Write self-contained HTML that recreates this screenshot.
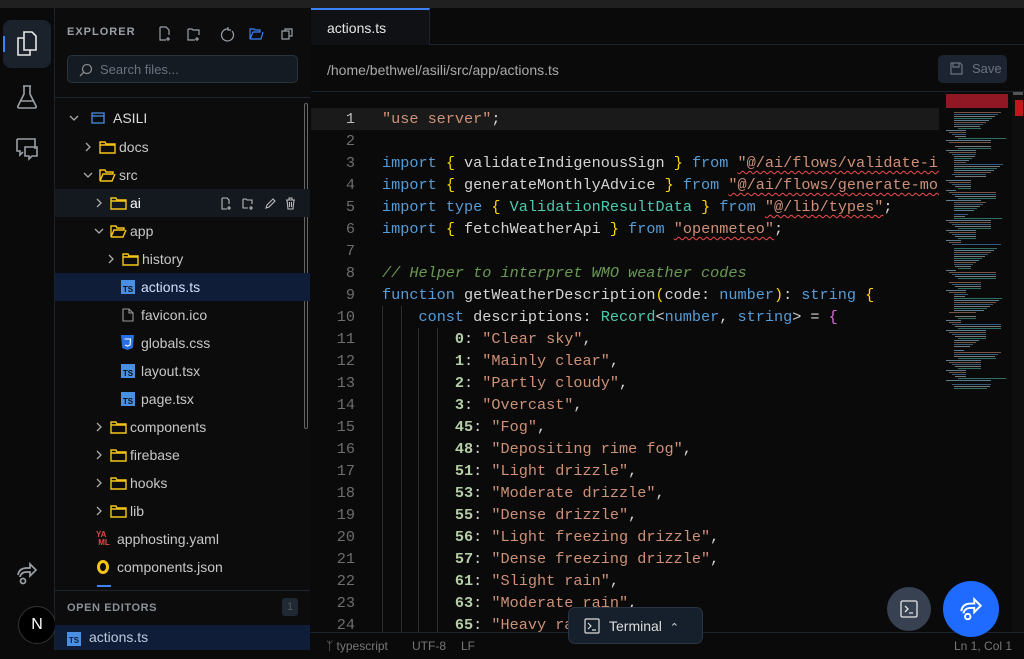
<!DOCTYPE html>
<html><head><meta charset="utf-8"><style>
*{box-sizing:border-box;margin:0;padding:0}
body{width:1024px;height:650px;overflow:hidden;background:#0a0a0a;font-family:"Liberation Sans",sans-serif;color:#ccc;position:relative}
.abs{position:absolute}
.topbar{left:0;top:0;width:1024px;height:8px;background:#202020}
.act{left:0;top:8px;width:55px;height:642px;background:#0a0a0a;border-right:1px solid #1c2128}
.side{left:55px;top:8px;width:255px;height:642px;background:#0c0c0d}
.row{position:absolute;left:0;width:255px;height:28px;font-size:14px;color:#c8c8c8;line-height:28px}
.row span{position:absolute}
.code{left:311px;top:108px;width:628px;height:524px;font-family:"Liberation Mono",monospace;font-size:15.2px;overflow:hidden}
.ln{position:absolute;left:0;width:628px;height:22px;line-height:22px;white-space:pre}
.ln .n{position:absolute;left:0;width:44px;text-align:right;color:#6e6e6e}
.ln .t{position:absolute;left:71px;color:#d4d4d4}
.k{color:#569cd6}.s{color:#ce9178}.b{color:#ffd700}.p{color:#da70d6}.ty{color:#4ec9b0}.c{color:#6a9955;font-style:italic}.num{color:#b5cea8;font-weight:bold}
.sq{text-decoration:underline wavy #f14c4c;text-decoration-thickness:1px;text-underline-offset:3px}
.g{position:absolute;top:0;width:1px;height:22px;background:#2e2e2e}
</style></head><body>
<div class="abs topbar"></div>
<div class="abs act">
 <div class="abs" style="left:3px;top:12px;width:48px;height:48px;background:#1b222b;border-radius:8px"></div>
 <div class="abs" style="left:3px;top:28px;width:2px;height:16px;background:#3b82f6"></div>
 <svg class="abs" style="left:15px;top:22px" width="24" height="28" viewBox="0 0 24 28" fill="none" stroke="#e6e6e6" stroke-width="1.6"><path d="M9 2h8l4 4v14H9z"/><path d="M9 8H3v17h12v-5"/></svg>
 <svg class="abs" style="left:16px;top:76px" width="22" height="26" viewBox="0 0 22 26" fill="none" stroke="#9aa0a6" stroke-width="1.6"><path d="M7 2h8M8 2v8L2 22q-1 2 2 2h14q3 0 2-2L14 10V2M4.5 17h13"/></svg>
 <svg class="abs" style="left:15px;top:129px" width="24" height="24" viewBox="0 0 24 24" fill="none" stroke="#9aa0a6" stroke-width="1.6"><path d="M2 2h18v10M2 2v12h3v4l3-3"/><path d="M10 10h12v9h-5l-3 3v-3h-4z"/></svg>
 <svg class="abs" style="left:15px;top:553px" width="24" height="24" viewBox="0 0 24 24" fill="none" stroke="#9aa0a6" stroke-width="1.7"><path d="M3 14q1-7 9-7h3V3l6 6-6 6v-4h-3q-6 0-7 5"/><circle cx="8" cy="20" r="2.5"/></svg>
 <div class="abs" style="left:18px;top:598px;width:38px;height:38px;border-radius:50%;background:#000;border:1.5px solid #333;color:#fff;font-size:16px;text-align:center;line-height:35px">N</div>
</div>
<div class="abs side">
 <div class="abs" style="left:12px;top:18px;font-size:11px;font-weight:bold;letter-spacing:1px;color:#9aa0a6">EXPLORER</div>
 <svg class="abs" style="left:103px;top:18px" width="140" height="16" viewBox="0 0 140 16" fill="none" stroke="#9aa0a6" stroke-width="1.2"><path d="M2 1h6l3 3v5M2 1v13h6M10 11v4M8 13h4"/><path d="M30 3h4l1 1h6v5M30 3v11h7M39 11v4M37 13h4"/><path d="M70 3a6 6 0 1 0 4 2M70 1v3h3"/><path d="M92 3h4l1 1h5v2H95l-3 7zM92 13h11l2-7" stroke="#3b82f6"/><path d="M124 5h7v8h-7zM127 5V3h7v7h-3"/></svg>
 <div class="abs" style="left:12px;top:47px;width:231px;height:28px;background:#151b22;border:1px solid #2a3340;border-radius:5px"></div>
 <svg class="abs" style="left:24px;top:55px" width="14" height="14" viewBox="0 0 14 14" fill="none" stroke="#888" stroke-width="1.3"><circle cx="8" cy="6" r="4.5"/><path d="M5 9l-4 4"/></svg>
 <div class="abs" style="left:45px;top:54px;font-size:13px;color:#6b7280">Search files...</div>
 <div class="abs" style="left:0;top:89px;width:255px;height:1px;background:#1f2630"></div>
 <div class="abs" style="left:249px;top:95px;width:4px;height:326px;border:1px solid #666;border-radius:3px"></div>
 <div class="row" style="top:96px"><svg style="position:absolute;left:14px;top:10px" width="10" height="8" viewBox="0 0 10 8" fill="none" stroke="#aaa" stroke-width="1.3"><path d="M1 2l4 4 4-4"/></svg><svg style="position:absolute;left:36px;top:8px" width="14" height="12" viewBox="0 0 14 12" fill="none" stroke="#4a90e2" stroke-width="1.3"><path d="M1 1h12v10H1zM1 4h12"/></svg><span style="left:58px;color:#ddd">ASILI</span></div>
 <div id="tree"></div>
 <div class="abs" style="left:0;top:582px;width:255px;height:1px;background:#1f2630"></div>
 <div class="abs" style="left:42px;top:577px;width:14px;height:2px;background:#3b82f6"></div>
 <div class="abs" style="left:12px;top:594px;font-size:11px;font-weight:bold;letter-spacing:.6px;color:#8a9099">OPEN EDITORS</div>
 <div class="abs" style="left:227px;top:590px;width:16px;height:18px;background:#1f2833;border-radius:3px;font-size:11px;color:#555;text-align:center;line-height:18px">1</div>
 <div class="abs" style="left:0;top:617px;width:255px;height:25px;background:#0f1d38"></div>
 <div class="abs" style="left:12px;top:624px;width:14px;height:14px;background:#4a90e2;font-size:8px;color:#0f1d38;font-weight:bold;line-height:18px;text-align:center">TS</div>
 <div class="abs" style="left:34px;top:621px;font-size:14px;color:#bcd">actions.ts</div>
</div>
<div class="abs" style="left:311px;top:8px;width:713px;height:37px;background:#0a0a0a;border-bottom:1px solid #1c2330"></div>
<div class="abs" style="left:311px;top:8px;width:119px;height:37px;background:#0f1115;border-top:2px solid #3b82f6;border-right:1px solid #1c2330;font-size:14px;color:#e6e6e6;padding:10px 0 0 16px">actions.ts</div>
<div class="abs" style="left:311px;top:45px;width:713px;height:47px;border-bottom:1px solid #1c2330"></div>
<div class="abs" style="left:327px;top:62px;font-size:14px;color:#aaa">/home/bethwel/asili/src/app/actions.ts</div>
<div class="abs" style="left:938px;top:55px;width:69px;height:28px;background:#1b2430;border-radius:5px;font-size:13px;color:#6b7280;line-height:28px;padding-left:34px">Save</div>
<svg class="abs" style="left:950px;top:62px" width="13" height="13" viewBox="0 0 13 13" fill="none" stroke="#6b7280" stroke-width="1.2"><path d="M1 1h9l2 2v9H1zM3 1v4h6V1"/></svg>
<div class="abs" style="left:311px;top:108px;width:628px;height:22px;background:#1a1a1a"></div>
<div class="abs code" id="code"></div>
<div class="abs" style="left:946px;top:92px;width:64px;height:294px" id="mm"></div>
<div class="abs" style="left:1012px;top:92px;width:12px;height:540px;background:#0e0e0e"></div>
<div class="abs" style="left:1013px;top:92px;width:10px;height:3px;background:#555"></div>
<div class="abs" style="left:1015px;top:100px;width:8px;height:16px;background:#c01818"></div>
<div class="abs" style="left:310px;top:632px;width:714px;height:18px;border-top:1px solid #1c2330;font-size:12px;color:#777;line-height:26px">
 <span style="position:absolute;left:16px">&#5833; typescript</span><span style="position:absolute;left:102px">UTF-8</span><span style="position:absolute;left:151px">LF</span><span style="position:absolute;left:644px">Ln 1, Col 1</span></div>
<div class="abs" style="left:568px;top:607px;width:135px;height:37px;background:#16202c;border:1px solid #2a3442;border-radius:7px;font-size:14px;color:#ddd;line-height:36px;padding-left:40px">Terminal &nbsp;<span style="font-size:11px">&#8963;</span></div>
<svg class="abs" style="left:584px;top:618px" width="16" height="16" viewBox="0 0 16 16" fill="none" stroke="#ddd" stroke-width="1.2"><rect x="1" y="1" width="14" height="14" rx="1"/><path d="M4 5l3 3-3 3M8 12h4"/></svg>
<div class="abs" style="left:887px;top:587px;width:44px;height:44px;border-radius:50%;background:#374151"></div>
<svg class="abs" style="left:900px;top:600px" width="18" height="18" viewBox="0 0 18 18" fill="none" stroke="#e6e6e6" stroke-width="1.3"><rect x="1" y="1" width="16" height="16" rx="1.5"/><path d="M5 6l3 3-3 3M9 13h4"/></svg>
<div class="abs" style="left:943px;top:581px;width:56px;height:56px;border-radius:50%;background:#1f6bff"></div>
<svg class="abs" style="left:958px;top:596px" width="26" height="26" viewBox="0 0 24 24" fill="none" stroke="#fff" stroke-width="1.8"><path d="M3 14q1-7 9-7h3V3l6 6-6 6v-4h-3q-6 0-7 5"/><circle cx="9" cy="19" r="2.5"/></svg>
<script>
var folder='<svg style="position:absolute;top:8px" width="17" height="13" viewBox="0 0 17 13" fill="none" stroke="#f5c518" stroke-width="1.4"><path d="M1 1h5l1 2h9v9H1zM1 4h15"/></svg>';
var ofolder='<svg style="position:absolute;top:8px" width="17" height="13" viewBox="0 0 17 13" fill="none" stroke="#f5c518" stroke-width="1.4"><path d="M1 1h5l1 2h7v2H4l-3 7zM1 12h12l3-7"/></svg>';
var chR='<svg style="position:absolute;top:9px" width="8" height="10" viewBox="0 0 8 10" fill="none" stroke="#aaa" stroke-width="1.3"><path d="M2 1l4 4-4 4"/></svg>';
var chD='<svg style="position:absolute;top:10px" width="10" height="8" viewBox="0 0 10 8" fill="none" stroke="#aaa" stroke-width="1.3"><path d="M1 2l4 4 4-4"/></svg>';
var ts=function(x){return '<span style="left:'+x+'px;top:7px;width:14px;height:14px;background:#4a90e2;font-size:8px;color:#0c0c0d;font-weight:bold;line-height:19px;text-align:center">TS</span>'};
var items=[
[147,'c',29,'docs',0],[175,'o',29,'src',1],[203,'c',40,'ai',0,'ai'],[231,'o',40,'app',1],[259,'c',52,'history',0],
[287,'ts',72,'actions.ts'],[315,'file',72,'favicon.ico'],[343,'css',72,'globals.css'],[371,'ts',72,'layout.tsx'],[399,'ts',72,'page.tsx'],
[427,'c',40,'components',0],[455,'c',40,'firebase',0],[483,'c',40,'hooks',0],[511,'c',40,'lib',0],[539,'yaml',40,'apphosting.yaml'],[567,'json',40,'components.json']];
var h='';
items.forEach(function(it){
 var y=it[0]-8-14,t=it[1],x=it[2],bg='';
 if(it[5]=='ai')bg='background:#141920;';
 if(it[3]=='actions.ts')bg='background:#0f1d38;';
 var s='<div class="row" style="top:'+y+'px;'+bg+'">';
 if(t=='c'||t=='o'){
  s+=(t=='c'?chR:chD).replace('position:absolute;','position:absolute;left:'+(x-(t=='c'?0:1))+'px;');
  s+=(t=='c'?folder:ofolder).replace('position:absolute;','position:absolute;left:'+(x+15)+'px;');
  s+='<span style="left:'+(x+35)+'px;'+(it[5]=='ai'?'color:#fff':'')+'">'+it[3]+'</span>';}
 else{
  var ix=x-6;
  if(t=='ts')s+=ts(ix);
  if(t=='file')s+='<svg style="position:absolute;left:'+(ix+1)+'px;top:7px" width="12" height="14" viewBox="0 0 12 14" fill="none" stroke="#999" stroke-width="1.1"><path d="M1 1h6l4 4v8H1zM7 1v4h4"/></svg>';
  if(t=='css')s+='<svg style="position:absolute;left:'+ix+'px;top:6px" width="13" height="15" viewBox="0 0 13 15"><path d="M0 0h13l-1.2 13L6.5 15 1.2 13z" fill="#2a6ee6"/><path d="M3.5 4h6L9 10l-2.5 1L4 10" fill="none" stroke="#fff" stroke-width="1.1"/></svg>';
  if(t=='yaml')s+='<span style="left:'+(x+1)+'px;top:-6px;font-size:8px;color:#e04848;font-weight:bold;line-height:8px;padding-top:12px">YA<br>&nbsp;ML</span>';
  if(t=='json')s+='<span style="left:'+(x+2)+'px;top:7px;width:12px;height:14px;border-radius:50%;border:3px solid #f5c518"></span>';
  var tx=(t=='yaml'||t=='json')?x+22:x+14;
  s+='<span style="left:'+tx+'px;'+(it[3]=='actions.ts'?'color:#cfe0ff':'')+'">'+it[3]+'</span>';}
 if(it[5]=='ai')s+='<svg style="position:absolute;left:165px;top:8px" width="80" height="13" viewBox="0 0 80 13" fill="none" stroke="#bbb" stroke-width="1.1"><path d="M2 1h5l2 2v4M2 1v11h5M9 9v4M7 11h4"/><path d="M23 2h3l1 1h5v4M23 2v9h5M31 9v4M29 11h4"/><path d="M46 11l1-3 6-6 2 2-6 6z"/><path d="M66 3h9M69 3V1h3v2M67 3l1 9h5l1-9M69.5 5v5M71.5 5v5"/></svg>';
 h+=s+'</div>';
});
document.getElementById('tree').innerHTML=h;
var L=[
'<span class="s">"use server"</span>;','',
'<span class="k">import</span> <span class="b">{</span> validateIndigenousSign <span class="b">}</span> <span class="k">from</span> <span class="s sq">"@/ai/flows/validate-indigenous-sign"</span>;',
'<span class="k">import</span> <span class="b">{</span> generateMonthlyAdvice <span class="b">}</span> <span class="k">from</span> <span class="s sq">"@/ai/flows/generate-monthly-advice"</span>;',
'<span class="k">import</span> <span class="k">type</span> <span class="b">{</span> <span class="ty">ValidationResultData</span> <span class="b">}</span> <span class="k">from</span> <span class="s sq">"@/lib/types"</span>;',
'<span class="k">import</span> <span class="b">{</span> fetchWeatherApi <span class="b">}</span> <span class="k">from</span> <span class="s sq">"openmeteo"</span>;','',
'<span class="c">// Helper to interpret WMO weather codes</span>',
'<span class="k">function</span> getWeatherDescription<span class="b">(</span>code: <span class="k">number</span><span class="b">)</span>: <span class="k">string</span> <span class="b">{</span>',
'    <span class="k">const</span> descriptions: <span class="ty">Record</span>&lt;<span class="k">number</span>, <span class="k">string</span>&gt; = <span class="p">{</span>'];
var e=[['0','Clear sky'],['1','Mainly clear'],['2','Partly cloudy'],['3','Overcast'],['45','Fog'],['48','Depositing rime fog'],['51','Light drizzle'],['53','Moderate drizzle'],['55','Dense drizzle'],['56','Light freezing drizzle'],['57','Dense freezing drizzle'],['61','Slight rain'],['63','Moderate rain'],['65','Heavy rain']];
e.forEach(function(a){L.push('        <span class="num">'+a[0]+'</span>: <span class="s">"'+a[1]+'"</span>,')});
var c='';
L.forEach(function(l,i){
 var g='';
 if(i>=9)g+='<div class="g" style="left:71px"></div><div class="g" style="left:90px"></div>';
 if(i>=10)g+='<div class="g" style="left:107px"></div><div class="g" style="left:126px"></div>';
 c+='<div class="ln" style="top:'+(i*22)+'px">'+g+'<span class="n"'+(i==0?' style="color:#bbb"':'')+'>'+(i+1)+'</span><span class="t">'+l+'</span></div>';
});
document.getElementById('code').innerHTML=c;
var m='',cols=['#9cdcfe','#ce9178','#569cd6','#d4d4d4','#4ec9b0'];
m+='<div style="position:absolute;left:0;top:2px;width:62px;height:14px;background:#b01c2a;opacity:.8"></div>';
for(var i=0;i<140;i++){var y=18+i*2;if(i%17==0)continue;var ind=(i%23<9)?8:(i%5)*3;var w=10+((i*37)%40);
 m+='<div style="position:absolute;left:'+ind+'px;top:'+y+'px;width:'+w+'px;height:1px;background:'+cols[i%5]+';opacity:.55"></div>';}
document.getElementById('mm').innerHTML=m;
</script>
</body></html>
